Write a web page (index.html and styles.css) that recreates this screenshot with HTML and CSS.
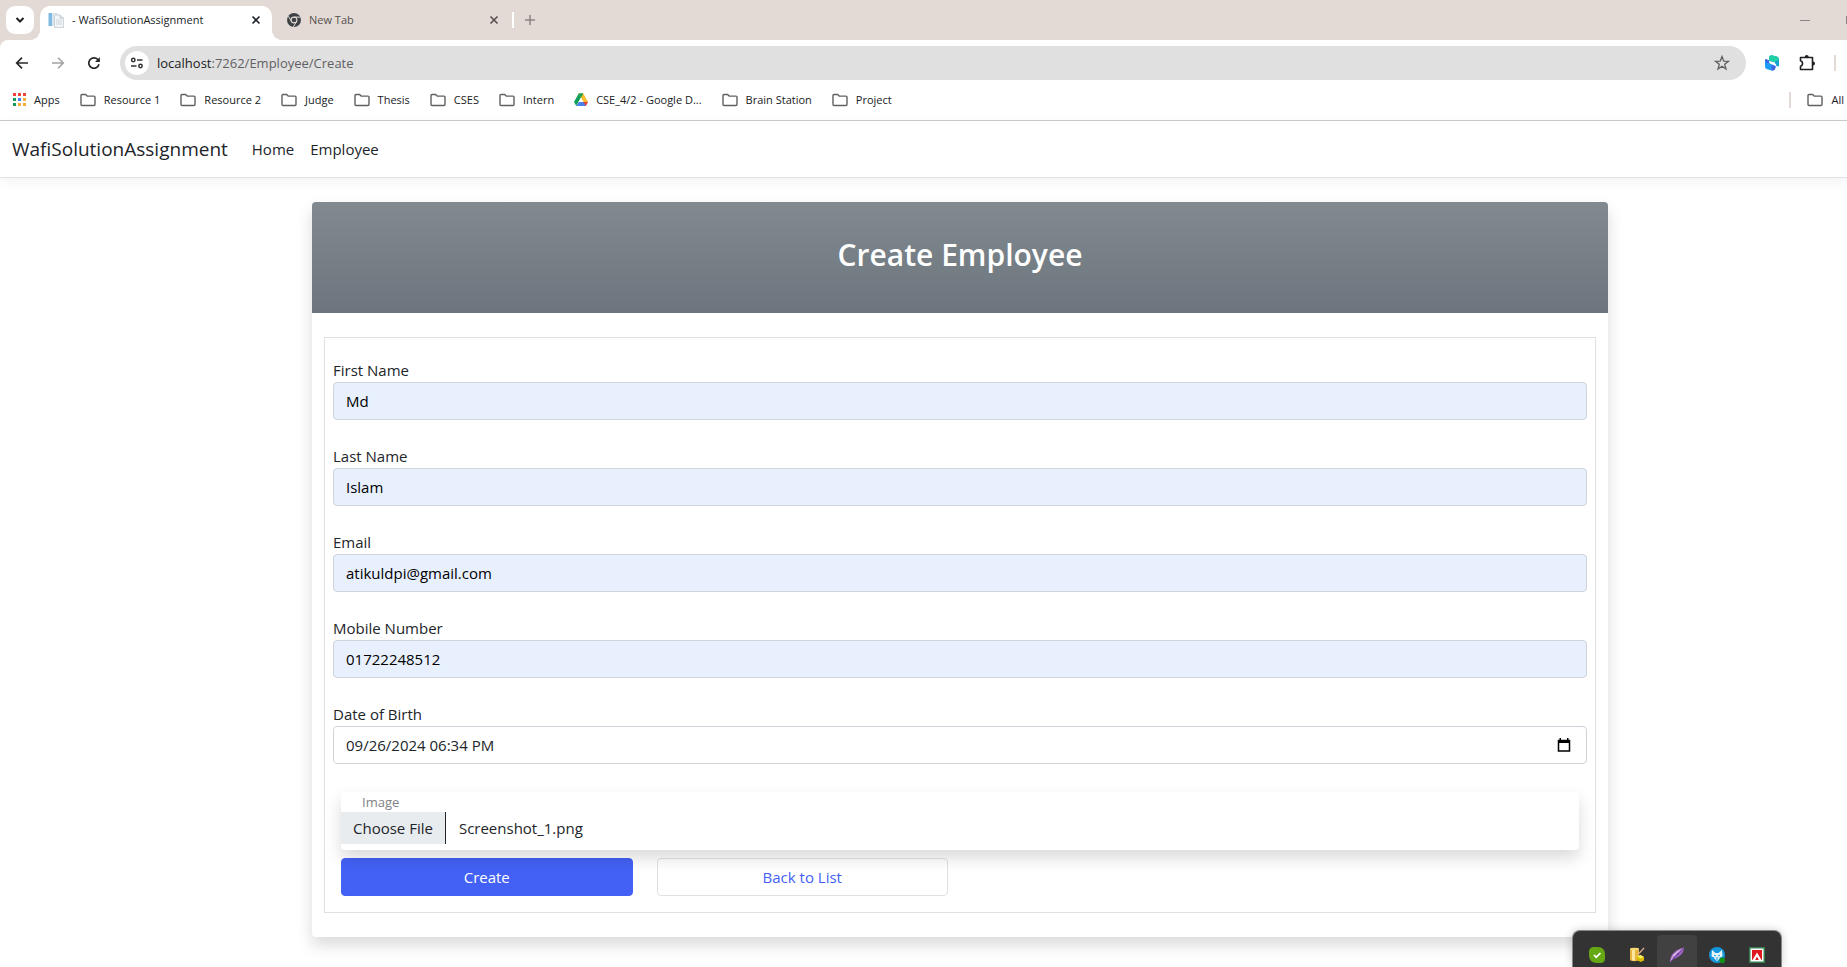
FILE: index.html
```html
<!DOCTYPE html>
<html lang="en">
<head>
<meta charset="utf-8">
<title>- WafiSolutionAssignment</title>
<link rel="stylesheet" href="styles.css">
</head>
<body>
<svg class="sprite" aria-hidden="true">
  <symbol id="folder" viewBox="0 0 16 16"><path d="M1 3.500a1 1 0 0 1 1-1h3.600l1.600 1.600H14a1 1 0 0 1 1 1v7.400a1 1 0 0 1-1 1H2a1 1 0 0 1-1-1z" fill="none" stroke="#5f6062" stroke-width="1.400"/></symbol>
  <symbol id="cross" viewBox="0 0 10 10"><path d="M1.500 1.500l7 7M8.500 1.500l-7 7" fill="none" stroke="currentColor" stroke-width="1.600"/></symbol>
</svg>

<div class="tabstrip">
  <button class="tab-search" aria-label="Search tabs"><svg width="10" height="10" viewBox="0 0 10 10"><path d="M1.500 3L5 6.500 8.500 3" fill="none" stroke="#222" stroke-width="2"/></svg></button>
  <div class="tab tab-active">
    <svg width="16" height="16" viewBox="0 0 16 16"><rect x="0.500" y="1" width="4" height="13" fill="#7db9e0"/><rect x="4" y="1" width="6" height="13" fill="#dde5ec"/><path d="M6.500 3H12l3.500 3v9.500h-9z" fill="#f3f5f8" stroke="#bcc5ce" stroke-width=".7"/><path d="M12 3v3h3.500" fill="#dde5ee" stroke="#b3bfca" stroke-width=".7"/><path d="M8 8h6M8 10h6M8 12h6" stroke="#c4d0dc" stroke-width=".8"/></svg>
    <span class="tab-title">- WafiSolutionAssignment</span>
    <button class="tab-close" aria-label="Close tab"><svg width="10" height="10"><use href="#cross"/></svg></button>
  </div>
  <div class="tab tab-idle">
    <svg width="14" height="14" viewBox="0 0 14 14"><circle cx="7" cy="7" r="7" fill="#3f4245"/><circle cx="7" cy="7" r="2.900" fill="#3f4245" stroke="#e3dad5" stroke-width="1.100"/><path d="M7 4.100h6.300M4.500 8.500L1.400 3.100M9.500 8.500L6.400 13.900" stroke="#e3dad5" stroke-width="1"/></svg>
    <span class="tab-title">New Tab</span>
    <button class="tab-close" aria-label="Close tab"><svg width="10" height="10"><use href="#cross"/></svg></button>
  </div>
  <span class="tab-divider"></span>
  <button class="tab-new" aria-label="New tab"><svg width="10" height="10" viewBox="0 0 10 10"><path d="M5 0v10M0 5h10" stroke="#8a8583" stroke-width="1.500"/></svg></button>
  <div class="window-controls">
    <button aria-label="Minimize"><svg width="10" height="10" viewBox="0 0 10 10"><path d="M0 5.500h10" stroke="#8a8583"/></svg></button>
    <span class="maximize-edge"></span>
  </div>
</div>

<div class="toolbar-wrap">
<div class="toolbar">
  <button class="nav-button" aria-label="Back"><svg width="14" height="14" viewBox="0 0 14 14"><path d="M13 7H2M7 1.700L1.700 7 7 12.300" fill="none" stroke="#27282a" stroke-width="1.700"/></svg></button>
  <button class="nav-button" aria-label="Forward"><svg width="14" height="14" viewBox="0 0 14 14"><path d="M1 7h11M7 1.700L12.300 7 7 12.300" fill="none" stroke="#a3a3a5" stroke-width="1.600"/></svg></button>
  <button class="nav-button" aria-label="Reload"><svg width="14" height="14" viewBox="0 0 14 14"><path d="M12 8.300A5.200 5.200 0 1 1 10.800 3.500L12 4.700" fill="none" stroke="#27282a" stroke-width="1.700"/><path d="M12.900 1v5H8z" fill="#27282a"/></svg></button>
  <div class="address">
    <button class="site-info" aria-label="Site information"><svg width="14" height="14" viewBox="0 0 14 14"><g fill="none" stroke="#333" stroke-width="1.500"><circle cx="3.300" cy="4" r="1.700"/><path d="M7 4h5.500M1 10h5.500"/><circle cx="10.500" cy="10" r="1.700"/></g></svg></button>
    <p class="url"><span>localhost</span>:7262/Employee/Create</p>
    <button class="star" aria-label="Bookmark this tab"><svg width="16" height="16" viewBox="0 0 16 16"><path d="M8 1.500l1.700 4.600 4.800.2-3.800 3 1.300 4.700L8 11.300 4 14l1.300-4.700-3.800-3 4.800-.2z" fill="none" stroke="#5f6062" stroke-width="1.300"/></svg></button>
  </div>
  <div class="extensions">
    <button aria-label="Extension"><svg width="16" height="16" viewBox="0 0 16 16"><path d="M5 6V3c0-2 1.500-3 3.500-2.600l4 1C14.200 2 15 3 15 5v5.300c0 1-.8 1.500-1.800 1L12 10.500V9z" fill="#14a3d2"/><path d="M5 6V3c0-2 1.500-3 3.500-2.600l4 1C14.200 2 15 3 15 5l-4.500 2z" fill="#1fd0a6"/><path d="M1 5.300c0-1 .8-1.300 1.800-.8L5 5.600l.5 2.600 6 2.800v1.500c-.4 2.300-1.800 3.300-3.800 2.900l-4.500-1.200C1.700 13.700 1 12.700 1 11z" fill="#1b9df4"/><path d="M1 5.300c0-1 .8-1.300 1.800-.8L5 5.600l.5 2.600C4 8.500 1 7.500 1 5.300zM7.500 10l4 1v1.500c-.4 2.300-1.800 3.300-3.800 2.900z" fill="#4262e4"/><path d="M5.200 6l5.800 1.600v2.600L5.500 8z" fill="#fff"/></svg></button>
    <button aria-label="Extensions"><svg width="18" height="18" viewBox="0 0 18 18"><path d="M2.500 3.500h12v12h-12v-3.300c2.700-.6 2.700-4.800 0-5.400z" fill="none" stroke="#202124" stroke-width="1.600" stroke-linejoin="round"/><path d="M6.700 3a2 2 0 0 1 4 0zM15 7.500a2 2 0 0 1 0 4z" fill="#202124"/></svg></button>
    <span class="bar-divider"></span>
  </div>
</div>
</div>

<nav class="bookmarks" aria-label="Bookmarks">
  <a href="#"><svg width="13" height="13" viewBox="0 0 13 13"><path d="M0 0h3v3H0zM5 0h3v3H5zM10 0h3v3h-3z" fill="#f04438"/><path d="M0 5h3v3H0zM0 10h3v3H0z" fill="#129e57"/><path d="M5 5h3v3H5z" fill="#4285f4"/><path d="M10 5h3v3h-3zM5 10h3v3H5zM10 10h3v3h-3z" fill="#f9ab35"/></svg>Apps</a>
  <a href="#"><svg width="16" height="16"><use href="#folder"/></svg>Resource 1</a>
  <a href="#"><svg width="16" height="16"><use href="#folder"/></svg>Resource 2</a>
  <a href="#"><svg width="16" height="16"><use href="#folder"/></svg>Judge</a>
  <a href="#"><svg width="16" height="16"><use href="#folder"/></svg>Thesis</a>
  <a href="#"><svg width="16" height="16"><use href="#folder"/></svg>CSES</a>
  <a href="#"><svg width="16" height="16"><use href="#folder"/></svg>Intern</a>
  <a href="#"><svg width="14" height="14" viewBox="0 0 14 14"><path d="M4.700 0.500h4.600L5 8 2.300 13 0 9z" fill="#11a05b"/><path d="M4.700.5h4.600L14 9H9.300z" fill="#fbbc2c"/><path d="M4.700.5h4.600L7 4.800z" fill="#11a05b"/><path d="M2.500 13L4.800 9H14l-2.300 4z" fill="#4a80ee"/><path d="M9.400 9H14l-2.300 4z" fill="#ea4335"/><path d="M7 4.800L9.400 9H4.600z" fill="#fff"/></svg>CSE_4/2 - Google D...</a>
  <a href="#"><svg width="16" height="16"><use href="#folder"/></svg>Brain Station</a>
  <a href="#"><svg width="16" height="16"><use href="#folder"/></svg>Project</a>
  <div class="all-bookmarks"><span class="bar-divider"></span><a href="#"><svg width="16" height="16"><use href="#folder"/></svg>All</a></div>
</nav>

<header class="site-header">
  <a class="brand" href="#">WafiSolutionAssignment</a>
  <nav class="site-nav"><a href="#">Home</a><a href="#">Employee</a></nav>
</header>

<main class="page">
  <section class="card">
    <div class="card-header"><h1>Create Employee</h1></div>
    <form class="form">
      <div class="field"><label for="first">First Name</label><input class="filled" id="first" type="text" value="Md"></div>
      <div class="field"><label for="last">Last Name</label><input class="filled" id="last" type="text" value="Islam"></div>
      <div class="field"><label for="email">Email</label><input class="filled" id="email" type="text" value="atikuldpi@gmail.com"></div>
      <div class="field"><label for="mobile">Mobile Number</label><input class="filled" id="mobile" type="text" value="01722248512"></div>
      <div class="field">
        <label for="dob">Date of Birth</label>
        <div class="date-box">
          <input id="dob" type="text" value="09/26/2024 06:34 PM">
          <button type="button" aria-label="Show date picker"><svg width="14" height="16" viewBox="0 0 14 16"><path d="M1.500 3.500h11v10.500h-11z" fill="none" stroke="#000" stroke-width="1.500"/><path d="M1 3h12v3H1zM2.500 1h1.500v2H2.500zM10 1h1.500v2H10z"/></svg></button>
        </div>
      </div>
      <div class="upload">
        <label class="upload-label" for="image">Image</label>
        <div class="upload-row"><label class="upload-button" for="image">Choose File</label><span>Screenshot_1.png</span></div>
        <input class="upload-input" id="image" type="file">
      </div>
      <div class="actions"><button class="button primary" type="submit">Create</button><a class="button outline" href="#">Back to List</a></div>
    </form>
  </section>
</main>

<div class="tray">
  <button aria-label="Security"><svg width="16" height="16" viewBox="0 0 16 16"><path d="M0 5C0 1.500 2 0 5 0h4c4 0 7 3 7 7v4c0 4-2 5-5 5H8C3 16 0 13 0 8z" fill="#65a814"/><path d="M5 8l2.200 2.200L11.500 6" fill="none" stroke="#fff" stroke-width="1.700"/></svg></button>
  <button aria-label="Database"><svg width="16" height="16" viewBox="0 0 16 16"><path d="M1 2c0-1.500 9-1.500 9 0v11c0 1.500-9 1.500-9 0z" fill="#e8b43f"/><path d="M3 1.500h3v12H3z" fill="#fbe6a0"/><ellipse cx="5.500" cy="2" rx="4.500" ry="1.200" fill="#f9d878"/><path d="M15 1L9 7.500" stroke="#d5a98d" stroke-width="1.400"/><path d="M8 9.500L11.500 8l3.500 2v3.500L11.500 15 8 13z" fill="#d8bb00"/><path d="M8 9.500L11.500 8l3.500 2-3.500 1.500z" fill="#f9ed62"/></svg></button>
  <button class="current" aria-label="Feather"><svg width="16" height="16" viewBox="0 0 16 16"><path d="M1 15.500C1 8 5 3 15 .5c0 5-3 9-11 12z" fill="#9b63bd"/><path d="M1 15.500C4 10 8 6 15 .5 10 3 4 6 2.500 11z" fill="#d9b9e8"/><path d="M1 15.500L15 .5M4 9.500L5 11M8 6l1.500 2" stroke="#713a98" stroke-width=".9"/></svg></button>
  <button aria-label="Fox"><svg width="16" height="16" viewBox="0 0 16 16"><circle cx="8" cy="8" r="8" fill="#1597db"/><path d="M3 3l3.500 3h3L13 3l.5 6L8 14 2.500 9z" fill="#e8f5fc"/><path d="M5 8l2 1M11 8L9 9M8 10v3M2.500 10.500l3 .5M13.500 10.500l-3 .5" stroke="#1597db"/><circle cx="13.200" cy="13.200" r="2.800" fill="#129318"/></svg></button>
  <button aria-label="Red app"><svg width="16" height="16" viewBox="0 0 16 16"><path d="M0 0h16v16H0z" fill="#377d50"/><path d="M1.500 1.500h13v13h-13z" fill="#fff"/><path d="M3 3h10v10H3z" fill="#df1820"/><path d="M3.500 13L8 5.500l4.500 7.500H9.800L8 9.500 6.200 13z" fill="#fff"/></svg></button>
</div>
</body>
</html>
```
FILE: styles.css
```css
*, *::before, *::after { box-sizing: border-box; }

body {
  margin: 0;
  background: #fff;
  color: #212529;
  font: 15px/24px "Open Sans", "Noto Sans", sans-serif;
}

button {
  padding: 0;
  border: 0;
  background: none;
  color: inherit;
  font: inherit;
}

a { color: inherit; text-decoration: none; }
svg { display: block; flex: none; }
.sprite { position: absolute; width: 0; height: 0; }

/* Browser tabs */
.tabstrip {
  display: flex;
  height: 40px;
  padding: 6px 0 0 6px;
  background: #e3dad5;
  font-size: 11px;
  line-height: 16px;
}
.tab-search {
  display: grid;
  place-items: center;
  width: 28px;
  height: 28px;
  margin-right: 6px;
  border-radius: 9px;
  background: #fff;
}
.tab { display: flex; align-items: center; gap: 8px; padding-bottom: 6px; }
.tab-title { flex: 1; white-space: nowrap; }
.tab-active {
  position: relative;
  width: 232px;
  padding-left: 8px;
  padding-right: 11px;
  border-radius: 10px 10px 0 0;
  background: #fff;
}
.tab-active::before, .tab-active::after {
  content: "";
  position: absolute;
  bottom: 0;
  width: 10px;
  height: 10px;
}
.tab-active::before { right: 100%; background: radial-gradient(circle at 0 0, transparent 10px, #fff 10px); }
.tab-active::after { left: 100%; background: radial-gradient(circle at 100% 0, transparent 10px, #fff 10px); }
.tab-idle {
  width: 227px;
  margin-left: 15px;
  padding-right: 15px;
  color: #55504e;
}
.tab-divider { width: 2px; height: 16px; margin: 6px 11px 0 -2px; background: #fff; }
.tab-new { height: 28px; }
.window-controls { display: flex; gap: 36px; height: 28px; margin-left: auto; align-items: center; }
.maximize-edge { width: 1px; height: 8px; background: #8a8583; }

/* Address bar */
.toolbar-wrap { background: #e3dad5; }
.toolbar {
  display: flex;
  align-items: center;
  height: 46px;
  padding: 0 11px 0 15px;
  border-radius: 8px 0 0 0;
  background: #fff;
}
.nav-button { margin-right: 22px; }
.address {
  display: flex;
  flex: 1;
  align-items: center;
  height: 34px;
  padding: 0 16px 0 5px;
  border-radius: 17px;
  background: #e0e0e0;
}
.nav-button + .address { margin-left: -3px; }
.site-info {
  display: grid;
  place-items: center;
  width: 24px;
  height: 24px;
  margin-right: 8px;
  border-radius: 50%;
  background: #fff;
}
.url { flex: 1; margin: 0; color: #606163; font-size: 13px; line-height: 20px; }
.url span { color: #202124; }
.extensions { display: flex; align-items: center; gap: 18px; margin-left: 18px; }
.bar-divider { width: 2px; height: 16px; background: #e3dad5; }

.bookmarks {
  display: flex;
  align-items: center;
  gap: 20px;
  height: 35px;
  padding: 0 3px 7px 13px;
  border-bottom: 1px solid #cacaca;
  font-size: 11px;
  line-height: 16px;
  color: #202124;
}
.bookmarks a { display: flex; align-items: center; gap: 8px; white-space: nowrap; }
.all-bookmarks { display: flex; align-items: center; gap: 16px; margin-left: auto; }

/* Site header */
.site-header {
  display: flex;
  align-items: center;
  gap: 24px;
  height: 57px;
  padding: 0 12px;
  border-bottom: 1px solid #dee2e6;
  box-shadow: 0 4px 12px rgba(0, 0, 0, .05);
}
.brand { font-size: 19px; line-height: 30px; }
.site-nav { display: flex; gap: 16px; }

/* Employee form */
.page { padding: 24px 239px 30px 312px; }
.card {
  border-radius: 4px;
  background: #fff;
  box-shadow: 0 8px 16px rgba(0, 0, 0, .15);
  padding-bottom: 24px;
}
.card-header {
  padding: 34px 24px 39px;
  border-radius: 4px 4px 0 0;
  background: linear-gradient(#828a90, #6c757d);
  color: #fff;
  text-align: center;
}
.card-header h1 { margin: 0; font-size: 30px; font-weight: 600; line-height: 38px; }
.form { margin: 24px 12px 0; padding: 20px 8px 16px; border: 1px solid #dee2e6; }
.field { display: flex; flex-direction: column; margin-bottom: 24px; }
.field input {
  width: 100%;
  height: 38px;
  padding: 6px 12px;
  border: 1px solid #ced4da;
  border-radius: 4px;
  background: #fff;
  color: #212529;
  font: inherit;
}
.field .filled { background: #e8f0fe; color: #000; }
.date-box {
  display: flex;
  align-items: center;
  height: 38px;
  padding-right: 15px;
  border: 1px solid #ced4da;
  border-radius: 4px;
}
.date-box input { flex: 1; height: 36px; border: 0; }

.upload {
  position: relative;
  margin: 28px 8px 8px;
  padding-bottom: 6px;
  border-radius: 4px;
  background: #fff;
  box-shadow: 0 8px 16px rgba(0, 0, 0, .15);
}
.upload-label { display: block; padding-left: 21px; color: #7f8285; font-size: 13px; line-height: 20px; }
.upload-row { display: flex; align-items: center; gap: 13px; }
.upload-button { padding: 4px 12px; border-right: 1px solid #212529; background: #e9ecef; }
.upload-input { position: absolute; inset: 0; width: 100%; height: 100%; opacity: 0; }

.actions { display: grid; grid-template-columns: repeat(4, 1fr); gap: 24px; padding: 0 8px; }
.button { padding: 6px 12px; border: 1px solid #dee2e6; border-radius: 4px; text-align: center; }
.primary { border-color: #4361f5; background: #4361f5; color: #fff; }
.outline { color: #4361f5; }

/* Tray flyout, above the page */
.tray {
  position: fixed;
  right: 65px;
  bottom: 0;
  display: flex;
  padding: 4px 4px 0;
  border: 1px solid #888;
  border-bottom: 0;
  border-radius: 8px 8px 0 0;
  background: #333;
  box-shadow: 0 0 8px rgba(0, 0, 0, .2);
}
.tray button { display: grid; place-items: center; width: 40px; height: 32px; padding-top: 7px; border-radius: 4px 4px 0 0; }
.tray .current { background: #414141; }
```
